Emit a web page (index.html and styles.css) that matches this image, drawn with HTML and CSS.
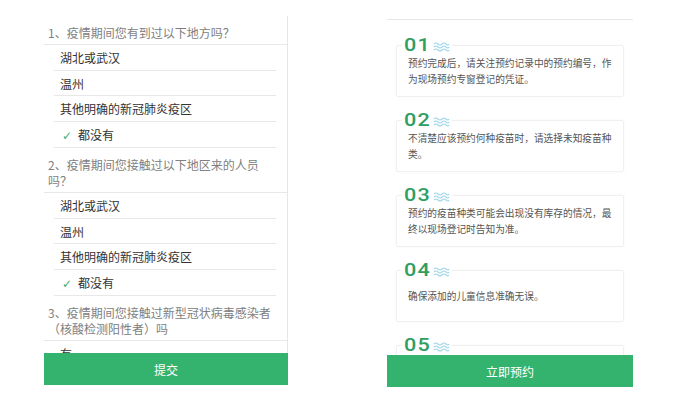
FILE: index.html
```html
<!DOCTYPE html>
<html lang="zh-CN">

<head>
    <meta charset="UTF-8">
    <meta name="viewport" content="width=device-width, initial-scale=1.0">
    <title>疫苗预约</title>
    <link rel="stylesheet" href="styles.css">
</head>

<body>
    <div class="page">
        <div class="survey">
            <div class="survey-list">
                <div class="question">1、疫情期间您有到过以下地方吗？</div>
                <div class="option">湖北或武汉</div>
                <div class="option">温州</div>
                <div class="option">其他明确的新冠肺炎疫区</div>
                <div class="option checked"><span class="check">✓</span>都没有</div>

                <div class="question">2、疫情期间您接触过以下地区来的人员吗？</div>
                <div class="option">湖北或武汉</div>
                <div class="option">温州</div>
                <div class="option">其他明确的新冠肺炎疫区</div>
                <div class="option checked"><span class="check">✓</span>都没有</div>

                <div class="question">3、疫情期间您接触过新型冠状病毒感染者（核酸检测阳性者）吗</div>
                <div class="option">有</div>
            </div>
            <button class="btn">提交</button>
        </div>

        <div class="notice">
            <div class="notice-list">
                <div class="card">
                    <div class="card-num"><span class="digits">01</span><svg class="wave" viewBox="0 0 17 10"><path d="M1 2q2-2 4 0t4 0t4 0t3 0M1 5q2-2 4 0t4 0t4 0t3 0M1 8q2-2 4 0t4 0t4 0t3 0"/></svg></div>
                    <p>预约完成后，请关注预约记录中的预约编号，作为现场预约专窗登记的凭证。</p>
                </div>
                <div class="card">
                    <div class="card-num"><span class="digits">02</span><svg class="wave" viewBox="0 0 17 10"><path d="M1 2q2-2 4 0t4 0t4 0t3 0M1 5q2-2 4 0t4 0t4 0t3 0M1 8q2-2 4 0t4 0t4 0t3 0"/></svg></div>
                    <p>不清楚应该预约何种疫苗时，请选择未知疫苗种类。</p>
                </div>
                <div class="card">
                    <div class="card-num"><span class="digits">03</span><svg class="wave" viewBox="0 0 17 10"><path d="M1 2q2-2 4 0t4 0t4 0t3 0M1 5q2-2 4 0t4 0t4 0t3 0M1 8q2-2 4 0t4 0t4 0t3 0"/></svg></div>
                    <p>预约的疫苗种类可能会出现没有库存的情况，最终以现场登记时告知为准。</p>
                </div>
                <div class="card">
                    <div class="card-num"><span class="digits">04</span><svg class="wave" viewBox="0 0 17 10"><path d="M1 2q2-2 4 0t4 0t4 0t3 0M1 5q2-2 4 0t4 0t4 0t3 0M1 8q2-2 4 0t4 0t4 0t3 0"/></svg></div>
                    <p>确保添加的儿童信息准确无误。</p>
                </div>
                <div class="card">
                    <div class="card-num"><span class="digits">05</span><svg class="wave" viewBox="0 0 17 10"><path d="M1 2q2-2 4 0t4 0t4 0t3 0M1 5q2-2 4 0t4 0t4 0t3 0M1 8q2-2 4 0t4 0t4 0t3 0"/></svg></div>
                </div>
            </div>
            <button class="btn">立即预约</button>
        </div>
    </div>
</body>

</html>
```

FILE: styles.css
```css
body {
    margin: 0;
    padding: 0;
    background-color: #fff;
    font-family: "Noto Sans CJK SC", "Noto Sans", sans-serif;
}

.page {
    display: flex;
    align-items: flex-start;
    padding: 16px 0 0 44px;
}

/* left: health survey */
.survey {
    width: 244px;
    height: 369px;
    display: flex;
    flex-direction: column;
}

.survey-list {
    flex: 1;
    overflow: hidden;
    border-right: 1px solid #e6e6e6;
}

.question {
    padding: 9px 9px 3px 4px;
    font-size: 12px;
    line-height: 16px;
    color: #808080;
    border-bottom: 1px solid #e8e8e8;
}

.option {
    margin: 0 11px 0 10px;
    padding: 2px 0 0 6px;
    font-size: 12px;
    line-height: 22.5px;
    color: #333;
    border-bottom: 1px solid #e8e8e8;
}

.option.checked {
    padding-left: 8px;
}

.check {
    font-family: "DejaVu Sans", sans-serif;
    color: #3bae73;
    margin-right: 6px;
}

.btn {
    display: block;
    width: 100%;
    height: 32px;
    border: none;
    padding: 0;
    background-color: #34b36f;
    color: #fff;
    font-family: "Noto Sans CJK SC", sans-serif;
    font-size: 12px;
    cursor: pointer;
}

/* right: booking notes */
.notice {
    width: 246px;
    height: 367px;
    margin: 3px 0 0 99px;
    display: flex;
    flex-direction: column;
    border-top: 1px solid #e6e6e6;
}

.notice-list {
    flex: 1;
    overflow: hidden;
    padding: 25px 9px 0;
}

.card {
    position: relative;
    height: 52px;
    margin-bottom: 23px;
    box-sizing: border-box;
    border: 1px solid #f0f0f0;
    border-radius: 2px;
    box-shadow: 0 0 3px rgba(0, 0, 0, 0.04);
    display: flex;
    align-items: center;
    padding: 0 7px 0 11px;
}

.card p {
    margin: 0;
    font-size: 9.7px;
    line-height: 16px;
    color: #555;
}

.card-num {
    position: absolute;
    top: -10px;
    left: 5px;
    padding: 0 2px;
    background-color: #fff;
    display: flex;
    align-items: center;
}

.digits {
    display: inline-block;
    width: 27px;
    font-family: Roboto, sans-serif;
    font-weight: 500;
    font-size: 18px;
    line-height: 18px;
    letter-spacing: 1px;
    color: #2f9e62;
    transform: scaleX(1.2);
    transform-origin: left center;
}

.wave {
    width: 17px;
    height: 10px;
    margin-left: 2px;
    margin-top: 3px;
}

.wave path {
    fill: none;
    stroke: #9fd4e8;
    stroke-width: 1.1;
}
```
